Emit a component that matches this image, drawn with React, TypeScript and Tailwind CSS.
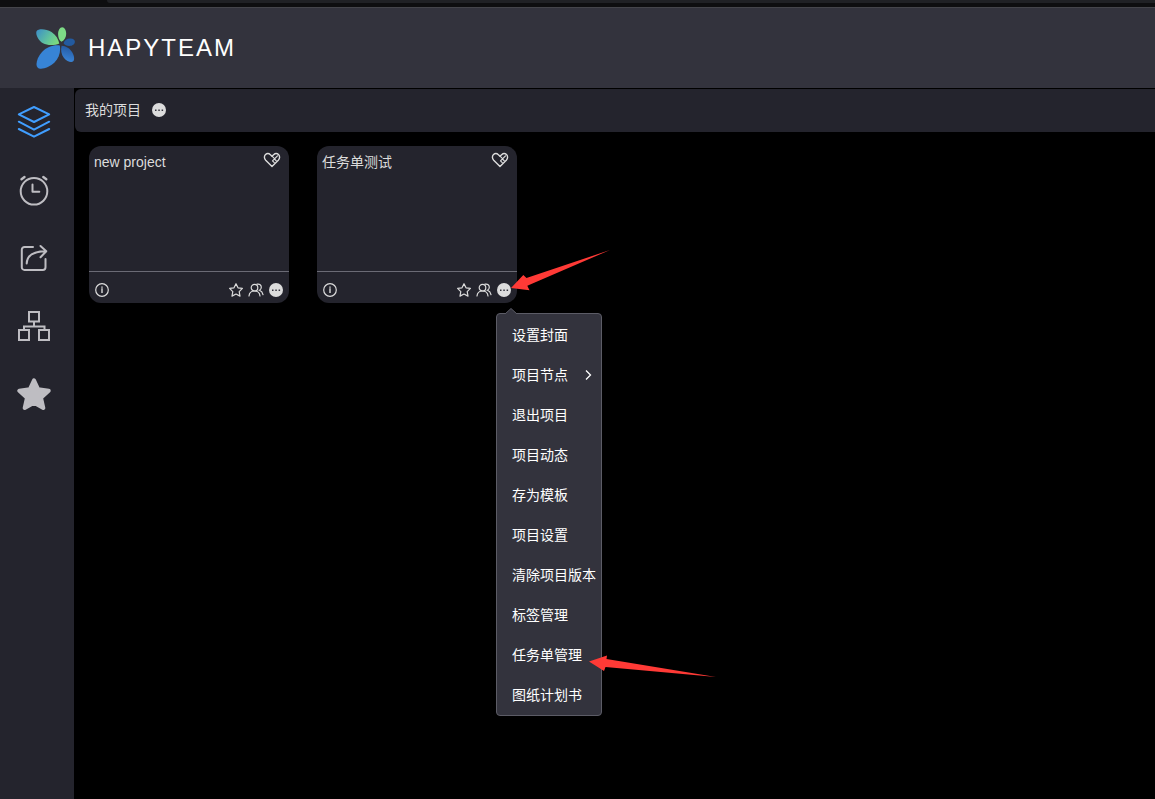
import type { ReactNode } from "react";

type Project = {
  name: string;
  menuOpen?: boolean;
};

const projects: Project[] = [
  { name: "new project" },
  { name: "任务单测试", menuOpen: true },
];

const menuItems = [
  { label: "设置封面" },
  { label: "项目节点", submenu: true },
  { label: "退出项目" },
  { label: "项目动态" },
  { label: "存为模板" },
  { label: "项目设置" },
  { label: "清除项目版本" },
  { label: "标签管理" },
  { label: "任务单管理", pointed: true },
  { label: "图纸计划书" },
];

function Logo() {
  return (
    <svg viewBox="0 0 41 44" className="h-11 w-[41px]" aria-hidden="true">
      <defs>
        <linearGradient id="leaf" x1="0" y1="0.2" x2="1" y2="0.7">
          <stop offset="0" stopColor="#3f93c4" />
          <stop offset="0.6" stopColor="#62c49c" />
          <stop offset="1" stopColor="#7ddb7c" />
        </linearGradient>
        <linearGradient id="petal" x1="0.7" y1="0" x2="0.5" y2="1">
          <stop offset="0" stopColor="#22569f" />
          <stop offset="1" stopColor="#3b86d8" />
        </linearGradient>
      </defs>
      <path d="M1.500 5.200C3.500 2.300 11 2.700 16.500 6c4.500 2.800 7 7.500 7.800 11.500-4.500 2-11.800 2.300-16.300-.2C3.500 14.800.300 8.500 1.500 5.200z" fill="url(#leaf)" />
      <path d="M27.200 1.200c2.400 0 4 3 4 6.600 0 3.700-1.700 6.600-4.800 8-2.200-1.600-3.300-4.300-3.300-7.600 0-3.700 1.700-7 4.100-7z" fill="#7ddb86" />
      <path d="M28.600 17.300c.7-3.300 3.700-5 7-4.800 2.600 0 4.400 1.500 4.300 3.300 0 2.400-2.600 4.200-5.600 4.200-2.600 0-4.600-1-5.700-2.700z" fill="#235a9f" />
      <path d="M26.600 19.700c4.400.2 8.400 2.800 10.600 6.500 2.200 3.700 2.500 7.500 1 9.100-1.800 1.800-6.500 0-9.200-3.300-2.800-3.500-3.500-8.200-2.400-12.300z" fill="url(#petal)" />
      <path d="M24.800 19.400c1.200 6.100-.8 12.600-5.300 17.100C14.500 41.500 5.500 44.300 2.800 41.700 0 38.900 2 31.200 7 25.900c4.600-4.800 11.300-7.300 17.800-6.500z" fill="#3784d6" />
    </svg>
  );
}

function NavIcon({ children }: { children: ReactNode }) {
  return (
    <svg
      viewBox="0 0 34 34"
      className="size-[34px]"
      fill="none"
      stroke="currentColor"
      strokeWidth="2"
      strokeLinecap="round"
      strokeLinejoin="round"
      aria-hidden="true"
    >
      {children}
    </svg>
  );
}

const navItems = [
  {
    label: "项目",
    active: true,
    icon: (
      <NavIcon>
        <path d="M17 2 32.200 9.300 17 17 1.800 9.300zM1.800 16.700 17 24.700l15.200-8M1.800 24 17 31.700 32.200 24" />
      </NavIcon>
    ),
  },
  {
    label: "待办",
    icon: (
      <NavIcon>
        <circle cx="17" cy="18.300" r="13.300" />
        <path d="M15.500 11.500v7.200h6.800" />
        <path strokeWidth="2.400" d="M4.500 6.200l3-2.200M26.300 4l3 2.200" />
      </NavIcon>
    ),
  },
  {
    label: "分享",
    icon: (
      <NavIcon>
        <path d="M16 6H7.500a2.700 2.700 0 0 0-2.700 2.700v17.500a2.700 2.700 0 0 0 2.700 2.700h18.300a2.700 2.700 0 0 0 2.700-2.700V18M9.700 22.500C10 15 16 10.200 29 10.200M23.500 5l5.800 5.200-5.800 6" />
      </NavIcon>
    ),
  },
  {
    label: "组织",
    icon: (
      <NavIcon>
        <path strokeLinejoin="miter" d="M12 3h10v9.500H12zM2 21h10v10H2zM22 21h10v10H22zM17 12.500v5M7 21v-3.500h20.500V21" />
      </NavIcon>
    ),
  },
  {
    label: "收藏",
    icon: (
      <NavIcon>
        <path
          fill="currentColor"
          strokeWidth="4"
          d="m17 3.400 4.200 8.900 10.500 1.500-7.700 6.900 2.300 10.300L17 25.800 7.700 31 10 20.700l-7.700-6.900 10.500-1.500z"
        />
      </NavIcon>
    ),
  },
];

function DotsIcon() {
  return (
    <svg viewBox="0 0 14 14" className="size-[14px]" aria-hidden="true">
      <circle cx="7" cy="7" r="7" fill="#dcdcdc" />
      <path d="M3 6.500h1.500V8H3zM6.300 6.500h1.500V8H6.300zM9.600 6.500h1.500V8H9.600z" fill="#33333d" />
    </svg>
  );
}

function HeartIcon() {
  return (
    <svg viewBox="0 0 18 16" className="h-4 w-[18px]" fill="none" stroke="currentColor" strokeWidth="1.400" strokeLinejoin="round" strokeLinecap="round" aria-hidden="true">
      <path d="M9 14.500 2.700 8.200C1 6.400 1 4 2.500 2.600 4 1.200 6 1.400 7.400 2.700L9 4.200l1.600-1.500c1.400-1.300 3.400-1.500 4.900-.1 1.500 1.400 1.500 3.800-.2 5.600z" />
      <path d="M9 4.200 11.500 6.700M14.500 3.800 9.500 8.800M9.500 8.800l1.800 1.800M11.500 7l1.800 1.800" strokeWidth="1.200" />
    </svg>
  );
}

function InfoIcon() {
  return (
    <svg viewBox="0 0 14 14" className="size-[14px]" fill="none" stroke="currentColor" strokeWidth="1.200" aria-hidden="true">
      <circle cx="7" cy="7" r="6.300" />
      <path d="M7 3.500v1.300M7 5.300V10" strokeWidth="1.400" />
    </svg>
  );
}

function StarIcon() {
  return (
    <svg viewBox="0 0 14 14" className="size-[14px]" fill="none" stroke="currentColor" strokeWidth="1.200" strokeLinejoin="round" aria-hidden="true">
      <path d="m7 .7 2 4.100 4.400.6-3.200 3.200.8 4.500-4-2.100-4 2.100.8-4.500L.6 5.400 5 4.800z" />
    </svg>
  );
}

function MembersIcon() {
  return (
    <svg viewBox="0 0 16 14" className="h-[14px] w-4" fill="none" stroke="currentColor" strokeWidth="1.200" strokeLinecap="round" aria-hidden="true">
      <circle cx="6.500" cy="4.700" r="3.300" />
      <path d="M1 13c.3-3 2.500-5 5.500-5s5.200 2 5.500 5M9 1.200c2.800-.6 4.300 1 4.300 3.100 0 1.500-.8 2.500-1.800 3 2 .8 3.100 2.200 3.500 4.400" />
    </svg>
  );
}

function ProjectMenu() {
  return (
    <div className="absolute -left-px top-[23px] z-10 w-[106px] rounded border border-[#5c5c66] bg-[#33333d]">
      {/* caret under the trigger */}
      <svg viewBox="0 0 12 6" className="absolute -top-[6px] left-2 h-[6px] w-3" aria-hidden="true">
        <path d="M0 6 6 .5 12 6z" fill="#33333d" />
        <path d="M0 6 6 .5 12 6" fill="none" stroke="#5c5c66" />
      </svg>
      <ul role="menu" className="pt-px">
        {menuItems.map((item) => (
          <li key={item.label} role="none" className="relative">
            <button
              type="button"
              role="menuitem"
              className="flex h-10 w-full items-center justify-between whitespace-nowrap pl-[15px] pr-[9px] text-sm text-white"
            >
              {item.label}
              {item.submenu && (
                <svg viewBox="0 0 8 10" className="h-[10px] w-2" fill="none" stroke="currentColor" strokeWidth="1.300" aria-hidden="true">
                  <path d="M2 .5 6.500 5 2 9.500" />
                </svg>
              )}
            </button>
            {item.pointed && (
              <svg viewBox="0 0 127 22" className="pointer-events-none absolute left-[92px] top-5 h-[22px] w-[127px]" aria-hidden="true">
                <path d="M0 6.500 18 .5 17.500 4 127 22 16.500 12 15 16z" fill="#ff3a36" />
              </svg>
            )}
          </li>
        ))}
      </ul>
    </div>
  );
}

function ProjectCard({ name, menuOpen }: Project) {
  return (
    <article className="relative w-[200px] rounded-xl bg-[#24242d] text-[#dcdcdc]">
      <div className="flex h-[125px] items-start justify-between pl-[5px] pr-2 pt-[6px]">
        <h2 className="text-sm">{name}</h2>
        <button type="button" aria-label="关注">
          <HeartIcon />
        </button>
      </div>
      <div className="flex h-8 items-center border-t border-[#6b6b75] px-[6px] pt-[6px] pb-px">
        <button type="button" aria-label="项目信息">
          <InfoIcon />
        </button>
        <div className="ml-auto flex items-center gap-[5px]">
          <button type="button" aria-label="收藏项目">
            <StarIcon />
          </button>
          <button type="button" aria-label="项目成员">
            <MembersIcon />
          </button>
          <button type="button" aria-label="更多操作" aria-expanded={!!menuOpen}>
            <DotsIcon />
          </button>
        </div>
      </div>
      {menuOpen && (
        <div className="absolute left-[180px] top-[144px]">
          <ProjectMenu />
          <svg viewBox="0 0 99 41" className="pointer-events-none absolute -top-10 left-[14px] h-[41px] w-[99px]" aria-hidden="true">
            <path d="M0 38 12.300 25 15.500 28 99 0 16.300 35.700 18.500 40.200z" fill="#ff3a36" />
          </svg>
        </div>
      )}
    </article>
  );
}

export default function App() {
  return (
    <div className="flex min-h-screen flex-col bg-black font-['Liberation_Sans','Noto_Sans_CJK_SC',sans-serif]">
      {/* window edge */}
      <div className="h-[7px] bg-[#0e0e10] pl-[107px]">
        <div className="h-[3px] rounded-bl bg-[#202125]" />
      </div>

      <header className="flex h-[81px] items-center gap-3 border-t border-[#45454b] bg-[#33333d] pl-[35px]">
        <Logo />
        <h1 className="text-2xl tracking-[2px] text-white">HAPYTEAM</h1>
      </header>

      <div className="flex flex-1">
        <nav className="w-[74px] shrink-0 bg-[#24242d]" aria-label="主导航">
          {navItems.map((item) => (
            <button
              key={item.label}
              type="button"
              aria-label={item.label}
              className={`flex h-[68px] w-[68px] items-center justify-center ${
                item.active ? "text-[#409eff]" : "text-[#bebdc2]"
              }`}
            >
              {item.icon}
            </button>
          ))}
        </nav>

        <main className="min-w-0 flex-1 pl-px pt-px">
          <div className="flex h-[43px] items-center gap-[11px] rounded-l-md bg-[#24242d] pb-[2px] pl-[10px] text-sm text-[#dcdcdc]">
            <span>我的项目</span>
            <button type="button" aria-label="项目分组操作">
              <DotsIcon />
            </button>
          </div>
          <div className="flex flex-wrap gap-7 p-[14px]">
            {projects.map((project) => (
              <ProjectCard key={project.name} {...project} />
            ))}
          </div>
        </main>
      </div>
    </div>
  );
}
